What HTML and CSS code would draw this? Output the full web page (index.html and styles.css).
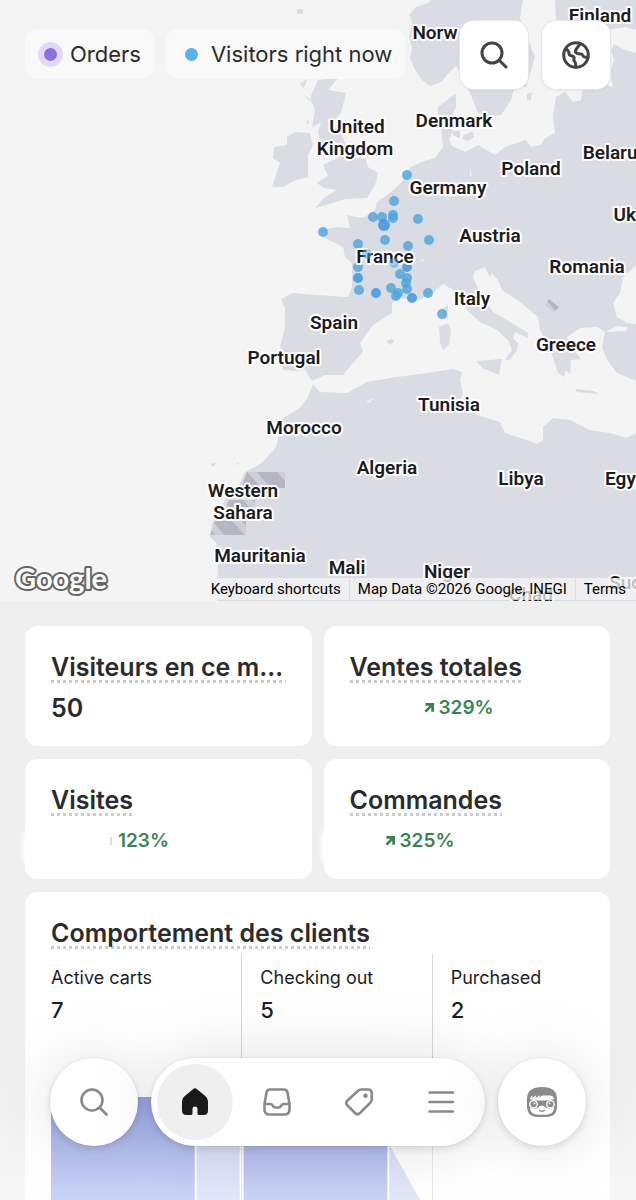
FILE: index.html
```html
<!DOCTYPE html>
<html lang="fr">

<head>
  <meta charset="UTF-8" />
  <meta name="viewport" content="width=device-width, initial-scale=1.0" />
  <title>Live View</title>
  <link rel="stylesheet" href="styles.css">
</head>

<body>
  <section class="map">
    <svg class="map-canvas" viewBox="0 0 636 601" preserveAspectRatio="xMidYMin slice" role="img" aria-label="Visitors map">
      <defs>
        <pattern id="hatch" width="22" height="22" patternUnits="userSpaceOnUse" patternTransform="rotate(-42)">
          <rect width="22" height="22" fill="#b4b7be" />
          <rect width="7" height="22" fill="#cccfd5" />
        </pattern>
      </defs>

      <!-- land -->
      <g class="land">
        <path d="M431 0L428 3L416 7L409 15L412 22L409 37L412 48L410 58L415 70L422 80L430 86L441 82L448 74L456 66L461 75L470 93L474 103L478 113L488 117L501 115L511 100L515 87L526 87L529 77L535 57L530 45L528 37L522 27L520 17L523 0Z" />
        <path d="M555 0L556 20L548 30L560 38L608 30L625 27L636 30V0Z" />
        <path d="M636 53L623 49L614 44L611 50L614 60L610 72L613 87L600 82L583 88L581 100L573 102L565 92L556 97L553 117L555 133L545 138L541 145L531 147L526 140L505 147L495 155L478 145L465 152L452 146L449 139L453 131L448 124L456 107L456 93L446 101L438 107L438 117L441 127L443 147L435 158L421 162L411 167L401 183L391 192L377 202L375 210L363 218L347 215L350 228L337 227L320 230L323 237L343 247L345 257L352 263V287L348 297L317 295L292 293L281 299L285 308V327L280 347L283 352V370L297 371L305 370L312 381L325 375H343L352 364L363 352L360 343L373 325L392 313V303L400 298L417 301L433 293L443 284L453 290L467 310L480 322L497 330L508 340L512 350L505 360L510 360L517 350L518 343L513 338L515 332L528 338V333L507 320L493 312L480 293L473 277L475 271L485 267L490 277L492 273L498 280L502 290L520 302L538 317L540 330L547 343L553 358L558 373L564 377L566 370L570 374L571 360L581 359L574 350L567 337L580 328L597 327L605 332L602 347L607 360L617 373L636 381V324L627 323L617 317L613 303L620 293L623 277L636 265Z" />
        <path d="M318 80L338 78L328 90L346 93L341 113L331 123L340 130L345 143L346 153L353 158L365 158L368 167L378 173L375 185L367 198L345 199L333 203L315 208L325 197L337 190L324 188L317 183L328 176L323 165L338 158L333 147L321 143L318 132L321 122L312 127L315 110L310 98Z" />
        <path d="M287 137L295 132L310 133L313 145L308 155L308 177L296 180L283 187L272 187L280 163L273 158L274 147L287 145Z" />
        <path d="M300 84L307 79L304 88ZM304 95L311 102L309 98ZM297 9H303V14H297ZM306 122L309 119L308 125Z" />
        <path d="M464 135L473 131L474 137L468 141L462 139ZM452 131L460 131L460 138L454 136ZM527 94L532 92L531 100L527 100Z" />
        <path d="M442 309L448 305L448 318L444 320ZM439 327L448 323L451 330L449 345L443 350L440 342ZM476 361L502 359L499 375L482 368ZM575 389L594 391L598 394L577 392ZM386 341L392 339L394 342L390 345Z" />
        <path d="M313 384L308 397L300 408L283 418L280 430L276 447L262 463L245 472L240 483L223 503L212 523L210 537L216 543L218 557L217 601H636V433L627 438L610 433L590 430L570 420L553 418L543 427V440L537 444L527 440L505 433L500 422L477 415L465 407L460 400L463 393L460 380L462 372L453 369L427 373L397 377L367 382L347 393L320 392Z" />
        <path d="M211 464L217 462L213 467ZM236 464L239 462L238 465Z" />
      </g>
      <path class="water" d="M605 332L617 326L628 327L626 331ZM366 402L373 398L370 403ZM419 262L425 258L423 261ZM470 169L472 175L470 176Z" />
      <path fill="url(#hatch)" d="M247 472H285V488H241ZM229 500H255V507H226ZM215 521H246V535H210ZM549 299L559 307L554 312L545 305Z" />

      <!-- visitors -->
      <g class="visitors">
        <circle cx="407" cy="175" r="5" /><circle cx="394" cy="201" r="5" />
        <circle cx="373" cy="217" r="5" /><circle cx="382" cy="217" r="5" />
        <circle cx="393" cy="215" r="5" /><circle cx="393" cy="218" r="5" />
        <circle cx="418" cy="219" r="5" /><circle cx="323" cy="232" r="5" />
        <circle cx="385" cy="240" r="5" /><circle cx="429" cy="240" r="5" />
        <circle cx="358" cy="244" r="5" /><circle cx="408" cy="246" r="5" />
        <circle cx="358" cy="267" r="5" /><circle cx="400" cy="274" r="5" />
        <circle cx="407" cy="278" r="5" /><circle cx="406" cy="283" r="5" />
        <circle cx="407" cy="289" r="5" /><circle cx="391" cy="288" r="5" />
        <circle cx="359" cy="290" r="5" /><circle cx="398" cy="293" r="5" />
        <circle cx="396" cy="296" r="5" /><circle cx="428" cy="293" r="5" />
        <circle cx="442" cy="314" r="5" />
        <g class="busy">
          <circle cx="384" cy="225" r="6" /><circle cx="407" cy="267" r="5" />
          <circle cx="358" cy="278" r="5" /><circle cx="376" cy="293" r="5" />
          <circle cx="412" cy="298" r="5" />
        </g>
      </g>

      <!-- country labels -->
      <g class="labels">
        <text x="600" y="22">Finland</text>
        <text x="435" y="39">Norw</text>
        <text x="357" y="133">United</text>
        <text x="355" y="155">Kingdom</text>
        <text x="454" y="127">Denmark</text>
        <text x="615" y="159">Belarus</text>
        <text x="531" y="175">Poland</text>
        <text x="448" y="194">Germany</text>
        <text x="646" y="221">Ukraine</text>
        <text x="490" y="242">Austria</text>
        <text x="587" y="273">Romania</text>
        <text x="385" y="263">France</text>
        <text x="472" y="305">Italy</text>
        <text x="334" y="329">Spain</text>
        <text x="566" y="351">Greece</text>
        <text x="284" y="364">Portugal</text>
        <text x="449" y="411">Tunisia</text>
        <text x="304" y="434">Morocco</text>
        <text x="387" y="474">Algeria</text>
        <text x="521" y="485">Libya</text>
        <text x="629" y="485">Egypt</text>
        <text x="243" y="497">Western</text>
        <text x="243" y="519">Sahara</text>
        <text x="260" y="562">Mauritania</text>
        <text x="347" y="574">Mali</text>
        <text x="447" y="578">Niger</text>
        <text x="531" y="601">Chad</text>
        <text x="636" y="589">Sudan</text>
      </g>
      <g class="visitors faint">
        <circle cx="367" cy="254" r="5" /><circle cx="394" cy="263" r="5" />
      </g>
    </svg>

    <div class="map-top">
      <ul class="legend">
        <li><span class="dot dot-orders"></span>Orders</li>
        <li><span class="dot dot-visitors"></span>Visitors right now</li>
      </ul>
      <div class="map-actions">
        <button type="button" aria-label="Search map">
          <svg width="28" height="28" viewBox="0 0 28 28"><circle cx="12" cy="12" r="10" /><path d="M19.5 19.5L26 26" /></svg>
        </button>
        <button type="button" aria-label="Globe view">
          <svg width="28" height="28" viewBox="0 0 28 28"><circle cx="14" cy="14" r="12.3" /><path d="M18 3L14 8.500Q12.500 11 15 12.500L19 13Q20 13 20.500 14L21.500 15.500Q22 16.200 23 16.200L26 16M4 7.500L6.500 10.500Q7 11.500 7 12.500Q7 14 8.500 14.500L11 15.200Q12.500 16 12 18L11.800 19Q12 20 13 21Q14 22 13.500 26" /></svg>
        </button>
      </div>
    </div>

    <div class="map-bottom">
      <svg class="google" width="96" height="36" viewBox="0 0 96 36" aria-label="Google"><text x="2" y="24">Google</text></svg>
      <div class="credits">
        <a href="#">Keyboard shortcuts</a>
        <span>Map Data ©2026 Google, INEGI</span>
        <a href="#">Terms</a>
      </div>
    </div>
  </section>

  <main class="dashboard">
    <article class="card">
      <h2><span>Visiteurs en ce moment</span></h2>
      <p class="value">50</p>
    </article>
    <article class="card">
      <h2><span>Ventes totales</span></h2>
      <p class="trend sales"><svg width="10" height="10" viewBox="0 0 11 11"><path d="M1.500 1.500H9.500V9.500M9.500 1.500L1.500 9.500" /></svg>329%</p>
    </article>
    <article class="card smudge">
      <h2><span>Visites</span></h2>
      <p class="trend visits"><i class="tick"></i>123%</p>
    </article>
    <article class="card smudge">
      <h2><span>Commandes</span></h2>
      <p class="trend orders"><svg width="10" height="10" viewBox="0 0 11 11"><path d="M1.500 1.500H9.500V9.500M9.500 1.500L1.500 9.500" /></svg>325%</p>
    </article>

    <article class="card behavior">
      <h2><span>Comportement des clients</span></h2>
      <div class="steps">
        <dl><dt>Active carts</dt><dd>7</dd></dl>
        <dl><dt>Checking out</dt><dd>5</dd></dl>
        <dl><dt>Purchased</dt><dd>2</dd></dl>
        <svg class="funnel" viewBox="0 0 534 103" preserveAspectRatio="none" aria-hidden="true">
          <defs>
            <linearGradient id="bar" x1="0" y1="0" x2="0" y2="1">
              <stop offset="0" stop-color="#8192de" />
              <stop offset="1" stop-color="#98a8ec" />
            </linearGradient>
          </defs>
          <path fill="url(#bar)" d="M0 0H144V103H0ZM193 0H337V103H193Z" />
          <path fill="#c8d1f5" d="M146 10L189 30V103H146ZM339 48L370 103H339Z" />
        </svg>
      </div>
    </article>
  </main>

  <div class="fade"></div>
  <nav class="tabbar">
    <button type="button" class="round" aria-label="Search">
      <svg width="30" height="30" viewBox="0 0 30 30"><circle cx="13" cy="13" r="10.500" /><path d="M20.500 20.500L27.500 27.500" /></svg>
    </button>
    <div class="tabs">
      <a href="#" class="active" aria-label="Home">
        <svg width="30" height="30" viewBox="0 0 30 30"><path class="solid" d="M12.700 2.400Q15 .300 17.300 2.400L25.500 9.200Q28 11.300 28 14V23.500Q28 28 23.500 28H19Q17.500 28 17.500 26.500V22Q17.500 19.500 15 19.500T12.500 22V26.500Q12.500 28 11 28H6.500Q2 28 2 23.500V14Q2 11.300 4.500 9.200Z" /></svg>
      </a>
      <a href="#" aria-label="Orders">
        <svg width="30" height="30" viewBox="0 0 30 30"><path d="M8 2.500H22Q25 2.500 25.500 5.500L27.500 17V22.500Q27.500 27.500 22.500 27.500H7.500Q2.500 27.500 2.500 22.500V17L4.500 5.500Q5 2.500 8 2.500ZM2.500 17H8Q10 17 10.800 18.500Q11.500 20.500 13 20.500H17Q18.500 20.500 19.200 18.500Q20 17 22 17H27.500" /></svg>
      </a>
      <a href="#" aria-label="Products">
        <svg width="30" height="30" viewBox="0 0 30 30"><path d="M17.500 2.500H24Q27.800 2.500 27.800 6.500V12Q27.800 14 26.500 15.500L16 26Q13.500 28.500 11 26L3.500 18.500Q1 16 3.500 13.500L13.500 4.200Q15 2.500 17.500 2.500Z" /><circle class="solid" cx="21.500" cy="8.700" r="2.200" /></svg>
      </a>
      <a href="#" aria-label="Menu">
        <svg width="30" height="30" viewBox="0 0 30 30"><path d="M3.500 5.500H27M3.500 15H27M3.500 24.500H27" /></svg>
      </a>
    </div>
    <button type="button" class="round" aria-label="Account">
      <svg width="32" height="32" viewBox="0 0 34 34">
        <path class="solid" d="M1 14Q1 1 17 1T33 14V21Q33 33 21 33H13Q1 33 1 21Z" />
        <path class="skin" d="M4 14Q4.500 11 7 10L6.500 13L11 9.500L10 13L15 9.500L14 12.500L17 10H26Q29.500 10.500 30 14L22 15.500H12ZM4 23Q8 25 12 23.500L15.500 21H18.500L22 23.500Q26 25 30 23Q29 30.500 21 30.500H13Q5 30.500 4 23Z" />
        <circle class="skin" cx="8" cy="19.500" r="4.600" /><circle class="skin" cx="26" cy="19.500" r="4.600" />
        <circle class="solid" cx="8" cy="19.500" r="3.200" /><circle class="solid" cx="26" cy="19.500" r="3.200" />
        <circle class="skin" cx="9" cy="18.500" r="1" /><circle class="skin" cx="25" cy="18.500" r="1" />
        <path class="smile" d="M14.500 26Q17 28 19.500 26" />
      </svg>
    </button>
  </nav>
</body>

</html>
```
FILE: styles.css
```css
* {
  box-sizing: border-box;
}

body {
  display: flex;
  flex-direction: column;
  min-height: 100vh;
  margin: 0;
  background: #efefef;
  color: #2b2b2b;
  font-family: Inter, sans-serif;
}

h2, p, ul, dl, dd {
  margin: 0;
  padding: 0;
}

button {
  padding: 0;
  border: none;
  font: inherit;
  cursor: pointer;
}

svg {
  display: block;
  fill: none;
  stroke-linecap: round;
  stroke-linejoin: round;
}

/* map */
.map {
  position: relative;
  display: flex;
  flex-direction: column;
  justify-content: space-between;
  height: 601px;
  background: #f4f4f4;
  overflow: hidden;
}

.map-canvas {
  position: absolute;
  inset: 0;
  width: 100%;
  height: 100%;
}

.land {
  fill: #dadce4;
}

.water {
  fill: #f4f4f4;
}

.labels {
  font: 600 19px Roboto, sans-serif;
  fill: #1c1c1e;
  stroke: #fff;
  stroke-width: 4px;
  paint-order: stroke;
  text-anchor: middle;
}

.visitors {
  fill: #4aa5dc;
  fill-opacity: 0.8;
}

.visitors.faint {
  fill-opacity: 0.5;
}

.busy {
  fill: #3592dc;
}

.map-top {
  position: relative;
  display: flex;
  justify-content: space-between;
  padding: 21px 26px 0 25px;
}

.legend {
  display: flex;
  gap: 12px;
  padding-top: 8px;
  list-style: none;
}

.legend li {
  display: flex;
  align-items: center;
  height: 50px;
  padding: 0 13px;
  border-radius: 12px;
  background: rgba(250, 250, 250, 0.8);
  font-size: 22px;
  white-space: nowrap;
}

.dot {
  width: 13px;
  height: 13px;
  margin: 0 13px 0 6px;
  border-radius: 50%;
}

.dot-orders {
  background: #8b70e0;
  box-shadow: 0 0 0 6px #e0d9f7;
}

.dot-visitors {
  background: #56b2ec;
}

.map-actions {
  display: flex;
  gap: 14px;
}

.map-actions button {
  display: grid;
  place-items: center;
  width: 68px;
  height: 68px;
  border-radius: 14px;
  background: #fff;
  box-shadow: 0 0 0 1px #e6e6ea, 0 1px 3px rgba(0, 0, 0, 0.1);
}

.map-actions svg {
  stroke: #444;
  stroke-width: 3;
}

.map-bottom {
  position: relative;
  display: flex;
  align-items: flex-end;
  justify-content: space-between;
  padding-left: 13px;
}

.google text {
  font: 700 29px Lato, sans-serif;
  fill: #fff;
  stroke: #666;
  stroke-width: 4px;
  paint-order: stroke;
}

.credits {
  display: flex;
  margin-bottom: 1px;
  font: 15px/22px Roboto, sans-serif;
  white-space: nowrap;
}

.credits > * {
  padding: 0 8px;
  border-left: 1px solid #dcdde0;
  background: rgba(245, 245, 245, 0.75);
  color: #000;
  text-decoration: none;
}

.credits > :first-child {
  border-left: none;
}

.credits > :last-child {
  padding-right: 10px;
}

/* cards */
.dashboard {
  flex: 1;
  display: grid;
  grid-template-columns: 1fr 1fr;
  grid-template-rows: auto auto 1fr;
  gap: 13px 12px;
  padding: 25px 26px 0 25px;
}

.card {
  position: relative;
  min-width: 0;
  height: 120px;
  padding: 25px 26px;
  border-radius: 13px;
  background: #fff;
}

.card h2 {
  display: flex;
  font-size: 25px;
  font-weight: 600;
  line-height: 32px;
}

.card h2 span {
  overflow: hidden;
  text-overflow: ellipsis;
  white-space: nowrap;
  background: repeating-linear-gradient(90deg, #ccc 0 3px, transparent 3px 6px) left bottom / 100% 3px no-repeat;
}

.value {
  font-size: 25px;
  font-weight: 600;
  line-height: 50px;
}

.trend {
  display: flex;
  align-items: center;
  gap: 5px;
  color: #388550;
  font-size: 19px;
  font-weight: 600;
  line-height: 50px;
}

.trend svg {
  stroke: #388550;
  stroke-width: 3;
  stroke-linecap: butt;
  stroke-linejoin: miter;
}

.sales {
  padding-left: 74px;
}

.visits {
  padding-left: 59px;
}

.orders {
  padding-left: 35px;
}

.tick {
  width: 2px;
  height: 8px;
  margin-right: 1px;
  background: #d3e5d8;
}

.smudge::before {
  content: "";
  position: absolute;
  left: -3px;
  bottom: 12px;
  width: 24px;
  height: 40px;
  border-radius: 12px;
  background: #fff;
  filter: blur(2px);
}

.behavior {
  grid-column: 1 / -1;
  display: flex;
  flex-direction: column;
  height: auto;
  min-height: 308px;
  padding-bottom: 0;
  border-radius: 13px 13px 0 0;
}

.steps {
  position: relative;
  flex: 1;
  display: grid;
  grid-template-columns: 5fr 5fr 4fr;
  margin-top: 5px;
}

.steps dl {
  padding-top: 9px;
  color: #1d1d1f;
}

.steps dl + dl {
  padding-left: 18px;
  border-left: 1px solid #d8d8d8;
}

.steps dt {
  font-size: 18px;
  line-height: 30px;
}

.steps dd {
  font-size: 22px;
  font-weight: 500;
  line-height: 34px;
}

.funnel {
  position: absolute;
  left: 0;
  bottom: 0;
  width: 100%;
  height: 103px;
}

/* bottom navigation */
.fade {
  position: fixed;
  inset: auto 0 0;
  height: 150px;
  background: linear-gradient(rgba(255, 255, 255, 0), rgba(255, 255, 255, 0.5));
}

.tabbar {
  position: fixed;
  right: 0;
  bottom: 54px;
  left: 0;
  display: flex;
  justify-content: space-between;
  gap: 13px;
  padding: 0 50px;
}

.round,
.tabs {
  height: 88px;
  border-radius: 44px;
  background: #fff;
  box-shadow: 0 0 0 1px rgba(0, 0, 0, 0.03), 0 3px 8px rgba(0, 0, 0, 0.12), 0 0 70px rgba(0, 0, 0, 0.12);
}

.round {
  display: grid;
  place-items: center;
  width: 88px;
}

.tabs {
  flex: 1;
  display: flex;
  align-items: center;
  justify-content: space-between;
  padding: 0 6px;
}

.tabs a {
  display: grid;
  place-items: center;
  width: 76px;
  height: 76px;
  border-radius: 50%;
}

.tabs .active {
  background: #efefef;
}

.tabbar svg {
  stroke: #8a8a8a;
  stroke-width: 2.6px;
}

.tabbar .solid {
  fill: #8a8a8a;
  stroke: none;
}

.tabbar .active .solid {
  fill: #1a1a1a;
}

.tabbar .skin {
  fill: #fff;
  stroke: none;
}

.tabbar .smile {
  stroke-width: 1.4px;
}
```
